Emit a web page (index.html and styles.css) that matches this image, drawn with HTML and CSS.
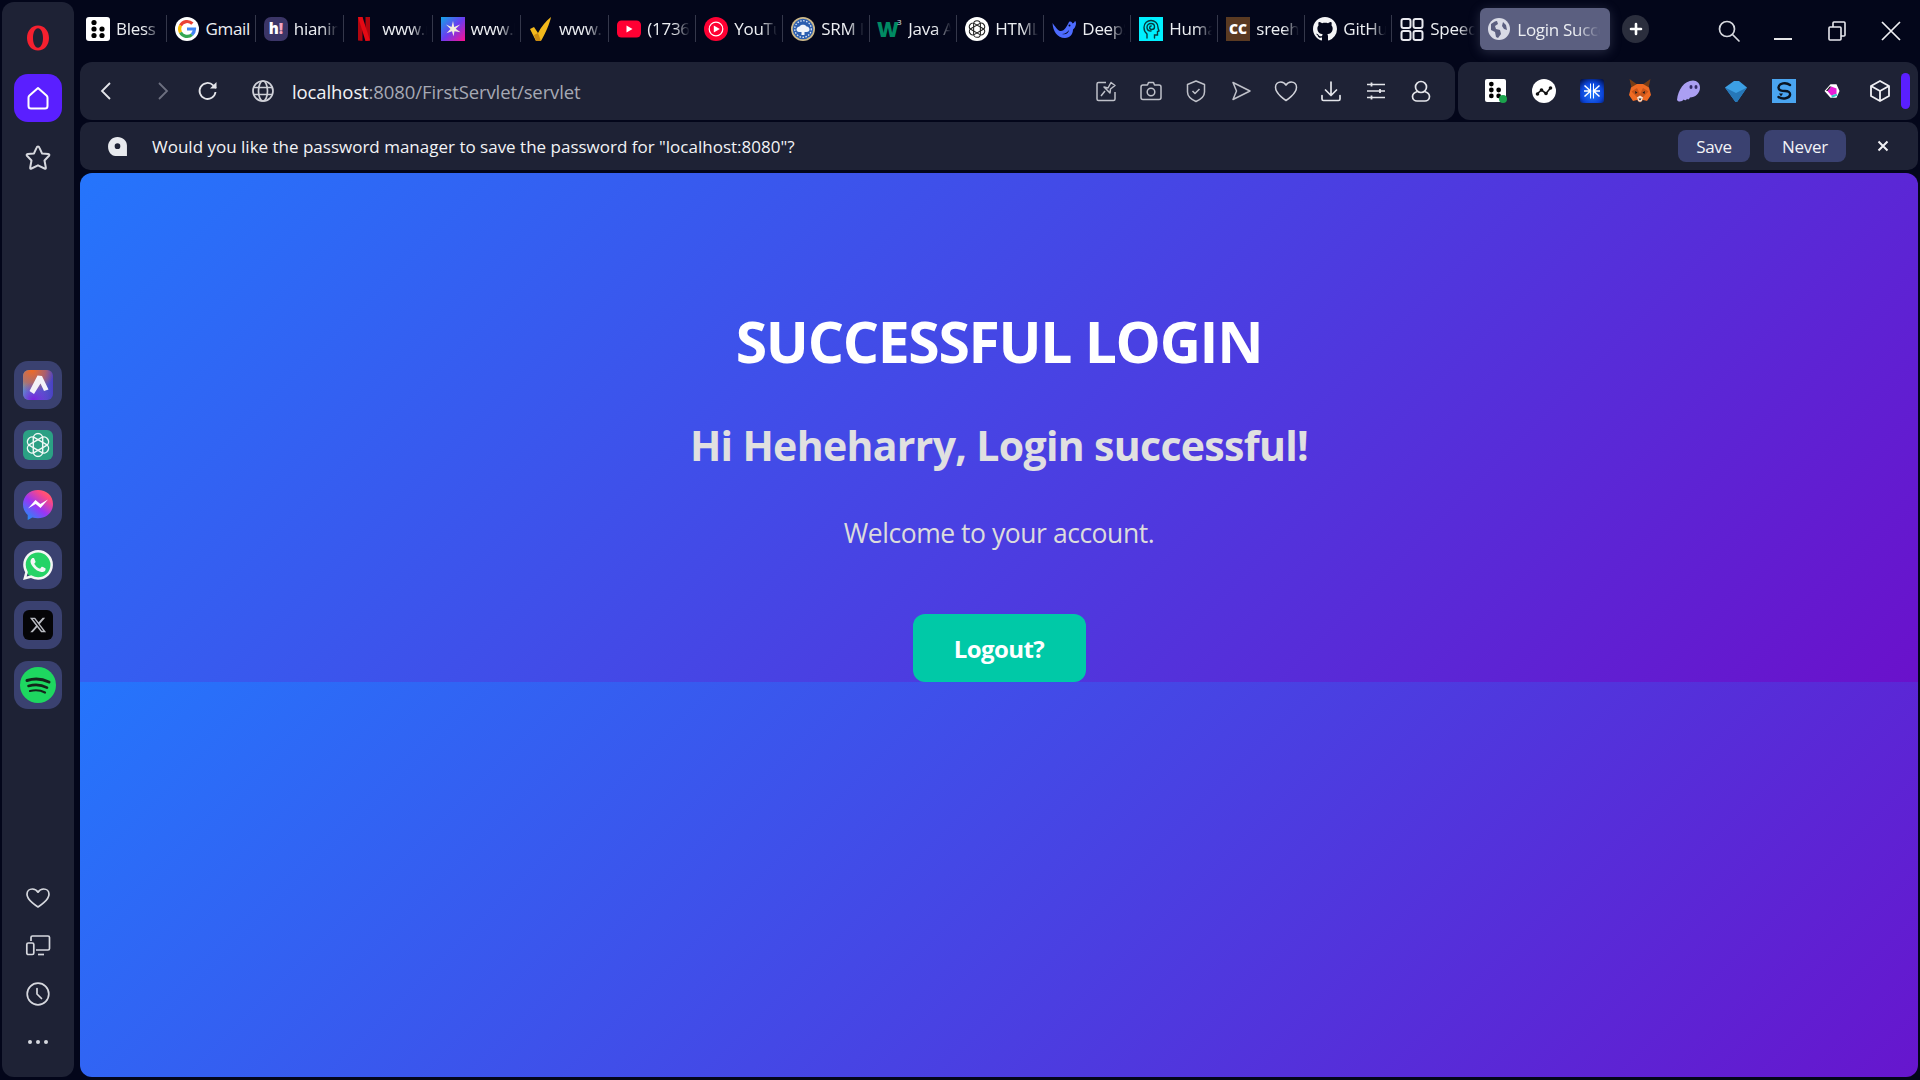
FILE: index.html
```html
<!DOCTYPE html>
<html lang="en">
<head>
<meta charset="utf-8">
<title>Login Successful</title>
<link rel="stylesheet" href="styles.css">
</head>
<body>
<svg class="defs" width="0" height="0" aria-hidden="true">
  <defs>
    <symbol id="gptknot" viewBox="0 0 24 24">
      <g fill="none" stroke="currentColor" stroke-width="1.400">
        <rect x="7.500" y="1" width="9" height="22" rx="4.500"/>
        <rect x="7.500" y="1" width="9" height="22" rx="4.500" transform="rotate(60 12 12)"/>
        <rect x="7.500" y="1" width="9" height="22" rx="4.500" transform="rotate(120 12 12)"/>
      </g>
    </symbol>
    <symbol id="blessdots" viewBox="0 0 24 24">
      <g fill="#000">
        <circle cx="8" cy="5.500" r="2.600"/><circle cx="8" cy="12" r="2.600"/><circle cx="16" cy="12" r="2.600"/>
        <circle cx="8" cy="18.500" r="2.600"/><circle cx="16" cy="18.500" r="2.600"/>
      </g>
    </symbol>
    <linearGradient id="msg" x1="0.100" y1="1" x2="0.900" y2="0">
      <stop offset="0" stop-color="#1597f8"/><stop offset=".45" stop-color="#9a35f5"/><stop offset=".8" stop-color="#ff4a80"/><stop offset="1" stop-color="#ff6a5a"/>
    </linearGradient>
    <linearGradient id="aria" x1="0" y1="0" x2="1" y2="0">
      <stop offset="0" stop-color="#5aa8c8"/><stop offset="1" stop-color="#4a3fc4"/>
    </linearGradient>
    <radialGradient id="ariaTop" cx=".3" cy="0" r=".75">
      <stop offset="0" stop-color="#f26a22"/><stop offset=".6" stop-color="#d0604a" stop-opacity=".7"/><stop offset="1" stop-color="#d0604a" stop-opacity="0"/>
    </radialGradient>
    <radialGradient id="ariaBot" cx=".35" cy="1" r=".6">
      <stop offset="0" stop-color="#7a1fe0"/><stop offset="1" stop-color="#7a1fe0" stop-opacity="0"/>
    </radialGradient>
    <linearGradient id="star" x1="0" y1="0" x2="1" y2="1">
      <stop offset="0" stop-color="#12a7e8"/><stop offset=".5" stop-color="#6a3cf0"/><stop offset="1" stop-color="#ff0f8f"/>
    </linearGradient>
    <radialGradient id="astar" cx=".5" cy=".6" r=".75">
      <stop offset="0" stop-color="#2a80ff"/><stop offset=".6" stop-color="#0b44d8"/><stop offset="1" stop-color="#010d40"/>
    </radialGradient>
  </defs>
</svg>

<div class="app">
  <aside class="sidebar">
    <svg class="opera" viewBox="0 0 30 30"><path fill="#f5202f" fill-rule="evenodd" d="M15 2.500C8.500 2.500 4 8 4 15s4.500 12.500 11 12.500S26 22 26 15 21.500 2.500 15 2.500zm0 2.800c3 0 5 4.400 5 9.700s-2 9.700-5 9.700-5-4.400-5-9.700 2-9.700 5-9.700z"/></svg>
    <div class="home-tile">
      <svg class="i28" viewBox="0 0 28 28"><path fill="none" stroke="#fff" stroke-width="2" stroke-linejoin="round" d="M14 4 L5.500 11.500 Q4.500 12.400 4.500 13.800 V22 Q4.500 24.500 7 24.500 H21 Q23.500 24.500 23.500 22 V13.800 Q23.500 12.400 22.500 11.500 Z"/></svg>
    </div>
    <svg class="star" viewBox="0 0 28 28"><path fill="none" stroke="#d6d8de" stroke-width="2" stroke-linejoin="round" d="M14 2.500Q15 2.500 15.500 3.800L18 9.400 24.300 10.100Q26 10.400 25 11.800L20.500 16.500 21.800 23.500Q22 25.200 20.500 24.500L14 21.300 7.500 24.500Q6 25.200 6.200 23.500L7.500 16.500 3 11.800Q2 10.400 3.700 10.100L10 9.400 12.500 3.800Q13 2.500 14 2.500z"/></svg>

    <div class="apps">
      <div class="app-tile"><svg class="i30" viewBox="0 0 30 30"><rect width="30" height="30" rx="6" fill="url(#aria)"/><rect width="30" height="30" rx="6" fill="url(#ariaTop)"/><rect width="30" height="30" rx="6" fill="url(#ariaBot)"/><path fill="#f4f2f8" d="M14.500 5.500l4.500.5 6.500 13.500-4.500 1.500-3.500-7.500L11 24l-4.500-3z"/></svg></div>
      <div class="app-tile"><svg class="i30" viewBox="0 0 30 30"><rect width="30" height="30" rx="6" fill="#2ba084"/><use href="#gptknot" x="2.500" y="2.500" width="25" height="25" color="#eef7f4"/></svg></div>
      <div class="app-tile"><svg class="i30" viewBox="0 0 30 30"><path fill="url(#msg)" d="M15 0C6.600 0 0 6.100 0 14.400c0 4.300 1.800 8 4.700 10.600V30l4.600-2.500c1.800.5 3.700.8 5.700.8 8.400 0 15-6.100 15-14.400S23.400 0 15 0z"/><path fill="#fff" d="M5 18.500l7.500-8.500 4.800 4 7.700-4.500-7.500 8.500-4.800-4z"/></svg></div>
      <div class="app-tile"><svg class="i30" viewBox="0 0 24 24"><circle cx="12" cy="12" r="11" fill="#25d366"/><path fill="#f4f6f5" d="M17.472 14.382c-.297-.149-1.758-.867-2.030-.967-.273-.099-.471-.148-.670.150-.197.297-.767.966-.940 1.164-.173.199-.347.223-.644.075-.297-.150-1.255-.463-2.390-1.475-.883-.788-1.480-1.761-1.653-2.059-.173-.297-.018-.458.130-.606.134-.133.298-.347.446-.520.149-.174.198-.298.298-.497.099-.198.050-.371-.025-.520-.075-.149-.669-1.612-.916-2.207-.242-.579-.487-.500-.669-.510-.173-.008-.371-.010-.570-.010-.198 0-.520.074-.792.372-.272.297-1.040 1.016-1.040 2.479 0 1.462 1.065 2.875 1.213 3.074.149.198 2.096 3.200 5.077 4.487.709.306 1.262.489 1.694.625.712.227 1.360.195 1.871.118.571-.085 1.758-.719 2.006-1.413.248-.694.248-1.289.173-1.413-.074-.124-.272-.198-.570-.347m-5.421 7.403h-.004a9.870 9.870 0 01-5.031-1.378l-.361-.214-3.741.982.998-3.648-.235-.374a9.860 9.860 0 01-1.510-5.260c.001-5.450 4.436-9.884 9.888-9.884 2.640 0 5.122 1.030 6.988 2.898a9.825 9.825 0 012.893 6.994c-.003 5.450-4.437 9.884-9.885 9.884m8.413-18.297A11.815 11.815 0 0012.050 0C5.495 0 .160 5.335.157 11.892c0 2.096.547 4.142 1.588 5.945L.057 24l6.305-1.654a11.882 11.882 0 005.683 1.448h.005c6.554 0 11.890-5.335 11.893-11.893a11.821 11.821 0 00-3.480-8.413z"/></svg></div>
      <div class="app-tile"><svg class="i30" viewBox="0 0 30 30"><rect width="30" height="30" rx="6" fill="#050507"/><g transform="translate(6 6) scale(.75)"><path fill="#b9bbc1" d="M18.244 2.250h3.308l-7.227 8.260 8.502 11.240H16.170l-5.214-6.817L4.990 21.750H1.680l7.730-8.835L1.254 2.250H8.080l4.713 6.231zm-1.161 17.520h1.833L7.084 4.126H5.117z"/></g></svg></div>
      <div class="app-tile"><svg class="i36" viewBox="0 0 36 36"><circle cx="18" cy="18" r="18" fill="#1ed760"/><g fill="none" stroke="#14241a" stroke-linecap="round"><path stroke-width="3" d="M7 13.500c7-2.200 15-1.800 22 1.500"/><path stroke-width="2.600" d="M8.500 19c6-1.700 13-1.300 18.500 1.700"/><path stroke-width="2.200" d="M10 24c5-1.200 10.500-.9 15 1.500"/></g></svg></div>
    </div>

    <div class="side-bottom">
      <svg class="side-ico" viewBox="0 0 24 24"><path fill="none" stroke="#d6d8de" stroke-width="1.700" stroke-linejoin="round" d="M12 22S1 15.500 1 9.200C1 6 3.500 4 6.300 4 8.600 4 10.800 5.200 12 7.200 13.200 5.200 15.400 4 17.700 4 20.500 4 23 6 23 9.200 23 15.500 12 22 12 22z"/></svg>
      <svg class="side-ico" viewBox="0 0 24 24"><g fill="none" stroke="#d6d8de" stroke-width="1.700" stroke-linejoin="round"><path d="M5 8V4.500Q5 3 6.500 3H22Q23.500 3 23.500 4.500V15.500Q23.500 17 22 17H10"/><rect x=".8" y="10" width="7" height="11.500" rx="1.500"/><path d="M12 21.500h6"/></g></svg>
      <svg class="side-ico" viewBox="0 0 24 24"><g fill="none" stroke="#d6d8de" stroke-width="1.700" stroke-linecap="round"><circle cx="12" cy="12" r="10.800"/><path d="M11 6.500V12l4.500 4.500"/></g></svg>
      <svg class="side-ico" viewBox="0 0 24 24"><g fill="#d6d8de"><circle cx="4" cy="12" r="2"/><circle cx="12" cy="12" r="2"/><circle cx="20" cy="12" r="2"/></g></svg>
    </div>
  </aside>

  <main class="main">
    <div class="tabstrip">
      <div class="tab"><svg class="fav" viewBox="0 0 24 24"><rect width="24" height="24" rx="3" fill="#fff"/><use href="#blessdots" width="24" height="24"/></svg><span class="title">Bless</span></div>
      <div class="tab"><svg class="fav" viewBox="0 0 24 24"><circle cx="12" cy="12" r="12" fill="#fff"/><path fill="none" stroke="#ea4335" stroke-width="3.200" d="M5.500 8.500A7.500 7.500 0 0 1 17.400 6.700"/><path fill="none" stroke="#fbbc05" stroke-width="3.200" d="M5.500 8.500a7.500 7.500 0 0 0 0 7"/><path fill="none" stroke="#34a853" stroke-width="3.200" d="M5.500 15.500a7.500 7.500 0 0 0 11.500 2.100"/><path fill="none" stroke="#4285f4" stroke-width="3.200" d="M17 17.600A7.500 7.500 0 0 0 19.500 12H12"/></svg><span class="title full">Gmail</span></div>
      <div class="tab"><svg class="fav" viewBox="0 0 24 24"><rect width="24" height="24" rx="7" fill="#3b3567"/><text x="12" y="17" class="fav-h">h<tspan fill="#f4a6c0">!</tspan></text></svg><span class="title">hianime</span></div>
      <div class="tab"><svg class="fav" viewBox="0 0 24 24"><path fill="#b1060f" d="M6 0h4.500v24L6 23.500z M13.500 0H18v23.500L13.500 24z"/><path fill="#e50914" d="M6 0h4.500l7.500 23.500L13.500 24z"/></svg><span class="title">www.netflix</span></div>
      <div class="tab"><svg class="fav" viewBox="0 0 24 24"><rect width="24" height="24" fill="url(#star)"/><path fill="#f3eedd" d="M12 4l1.200 6 6-2.500-4.500 4.300 4.800 3.500-6-1-1 5-1.500-5-5.500 2 4-4.200L5 7.500l5.500 2.500z"/></svg><span class="title">www.lovable</span></div>
      <div class="tab"><svg class="fav" viewBox="0 0 24 24"><path fill="#f2b81c" d="M1 12l4-2 4 6C12 10 17 4 22 0c-1 6-6 17-10 24H7z"/><path fill="#c98a10" d="M7 24l-2-6 4-2 3 8z"/></svg><span class="title">www.sololearn</span></div>
      <div class="tab"><svg class="fav" viewBox="0 0 24 24"><rect y="3.500" width="24" height="17" rx="4.500" fill="#ff0033"/><path fill="#fff" d="M9.500 8.500l6 3.500-6 3.500z"/></svg><span class="title">(1736) YouTube</span></div>
      <div class="tab"><svg class="fav" viewBox="0 0 24 24"><circle cx="12" cy="12" r="12" fill="#ff0033"/><circle cx="12" cy="12" r="6.800" fill="none" stroke="#fff" stroke-width="1.200"/><path fill="#fff" d="M9.800 8.500l6 3.500-6 3.500z"/></svg><span class="title">YouTube Music</span></div>
      <div class="tab"><svg class="fav" viewBox="0 0 24 24"><circle cx="12" cy="12" r="12" fill="#cdb98a"/><circle cx="12" cy="12" r="10.300" fill="#2c5fb0"/><circle cx="12" cy="12" r="8.300" fill="none" stroke="#dfe6f2" stroke-width="1.300" stroke-dasharray="1.500 1.500"/><path fill="#f2f5fa" d="M5.500 12.500c0-2 2-3 3-3 1-2.500 6-2.500 7 0 2 0 3 1.500 3 3s-1 2.500-3 2.500h-2v3h-3v-3H8c-1.500 0-2.500-1-2.500-2.500z"/></svg><span class="title">SRM Institute</span></div>
      <div class="tab"><svg class="fav" viewBox="0 0 24 24"><text x="-1" y="20" class="fav-w">W</text><text x="19" y="8" class="fav-3">3</text></svg><span class="title">Java ArrayList</span></div>
      <div class="tab"><svg class="fav" viewBox="0 0 24 24"><circle cx="12" cy="12" r="12" fill="#fff"/><use href="#gptknot" x="3" y="3" width="18" height="18" color="#222"/></svg><span class="title">HTML Basics</span></div>
      <div class="tab"><svg class="fav" viewBox="0 0 24 24"><path fill="#4d6bfe" d="M.5 6C1 14 5 21 13 21 18 21 21 17 21 12.500 22 12 23.500 10 24 7 24 5 23.500 4 23 4 22.500 5 22 6 20.500 6.500 20 5 18.500 4 17 5 15 9 12 15 8 14 5 13 3 9 .5 6z"/><circle cx="17.500" cy="8.500" r="1" fill="#03061a"/><path fill="#03061a" d="M10 17c3 0 5-1.500 7-4-.5 3-3 5-7 4z"/></svg><span class="title">DeepSeek</span></div>
      <div class="tab"><svg class="fav" viewBox="0 0 24 24"><rect width="24" height="24" fill="#00f0ff"/><g fill="none" stroke="#063c40" stroke-width="1.400" stroke-linecap="round"><path d="M8 21v-4C5.500 15 5 12.500 5 10.500 5 6 8.500 3.500 12 3.500s7 2.500 7 7c0 1.500 1 3 1 3.500l-1.500.5V18h-3v3"/><path d="M12 14c-2.500 0-4-1.800-4-3.800S9.800 6.500 12 6.500s3.500 1.700 3.500 3.500-1.300 2.500-2.800 2.500-2-1-2-2 .8-1.500 1.500-1.500"/></g></svg><span class="title">Humanizer</span></div>
      <div class="tab"><svg class="fav" viewBox="0 0 24 24"><rect width="24" height="24" fill="#5a3a22"/><text x="12" y="17" class="fav-c">CC</text></svg><span class="title">sreehari</span></div>
      <div class="tab"><svg class="fav" viewBox="0 0 16 16"><path fill="#f4f4f6" d="M8 0C3.580 0 0 3.580 0 8c0 3.540 2.290 6.530 5.470 7.590.4.070.55-.17.55-.38 0-.19-.01-.82-.01-1.490-2.010.37-2.530-.49-2.690-.94-.09-.23-.48-.94-.82-1.130-.28-.15-.68-.52-.01-.53.63-.01 1.080.58 1.230.82.72 1.210 1.870.87 2.330.66.070-.52.28-.87.51-1.070-1.780-.2-3.640-.89-3.640-3.950 0-.87.31-1.590.82-2.150-.08-.2-.36-1.020.08-2.120 0 0 .67-.21 2.200.82.64-.18 1.320-.27 2-.27.68 0 1.360.09 2 .27 1.530-1.040 2.200-.82 2.200-.82.44 1.100.16 1.920.08 2.120.51.56.82 1.270.82 2.150 0 3.070-1.870 3.750-3.650 3.950.29.25.54.73.54 1.480 0 1.070-.01 1.930-.01 2.200 0 .21.15.46.55.38A8.013 8.013 0 0016 8c0-4.420-3.580-8-8-8z"/></svg><span class="title">GitHub</span></div>
      <div class="tab last"><svg class="fav" viewBox="0 0 24 24"><g fill="none" stroke="#e8e8ee" stroke-width="2"><rect x="1.500" y="2" width="9" height="9" rx="2"/><rect x="13.500" y="2" width="9" height="9" rx="2"/><rect x="1.500" y="14" width="9" height="9" rx="2"/><rect x="13.500" y="14" width="9" height="9" rx="2"/></g></svg><span class="title">Speed Dial</span></div>
      <div class="tab-active"><svg class="fav" viewBox="0 0 24 24"><circle cx="12" cy="12" r="11" fill="#d9dbe6"/><path fill="#5b5f80" d="M4 7c3-2 4-3 6-3l1 3-3 2 1 3 4 1 1 4-3 4-2-1-1-5-4-2zM16 5l3 3 1 5-3-1-2-3z"/></svg><span class="title">Login Successful</span></div>
      <div class="newtab"><svg class="i14" viewBox="0 0 14 14"><path stroke="#fff" stroke-width="2.600" stroke-linecap="round" d="M7 2v10M2 7h10"/></svg></div>
      <div class="winctl">
        <div class="wbtn"><svg class="i24" viewBox="0 0 24 24"><g fill="none" stroke="#d6d8de" stroke-width="1.700" stroke-linecap="round"><circle cx="10" cy="10" r="7.500"/><path d="M15.500 15.500l6.500 6.500"/></g></svg></div>
        <div class="wbtn"><svg class="i24" viewBox="0 0 24 24"><path stroke="#fff" stroke-width="1.800" d="M3 20h18"/></svg></div>
        <div class="wbtn"><svg class="i24" viewBox="0 0 24 24"><g fill="none" stroke="#e8e8ee" stroke-width="1.600"><rect x="4" y="8" width="12" height="13" rx="1"/><path d="M8 8V4q0-1 1-1h10q1 0 1 1v12q0 1-1 1h-3"/></g></svg></div>
        <div class="wbtn"><svg class="i24" viewBox="0 0 24 24"><path stroke="#f0f0f4" stroke-width="1.700" d="M3 3l18 18M21 3L3 21"/></svg></div>
      </div>
    </div>

    <div class="toolrow">
      <div class="addressbar">
        <svg class="tool back" viewBox="0 0 24 24"><path fill="none" stroke="#e4e5ea" stroke-width="1.800" d="M16 4l-8 8 8 8"/></svg>
        <svg class="tool fwd" viewBox="0 0 24 24"><path fill="none" stroke="#6d7080" stroke-width="1.800" d="M9 4l8 8-8 8"/></svg>
        <svg class="tool reload" viewBox="0 0 24 24"><g fill="none" stroke="#e4e5ea" stroke-width="1.800"><path d="M19.500 13a8 8 0 1 1-2.300-6.700L20 9"/></g><path fill="#e4e5ea" d="M20.500 3v6.500H14z"/></svg>
        <svg class="tool globe" viewBox="0 0 24 24"><g fill="none" stroke="#cfd1d8" stroke-width="1.700"><circle cx="12" cy="12" r="10"/><ellipse cx="12" cy="12" rx="4.500" ry="10"/><path d="M2.500 8.500h19M2.500 15.500h19"/></g></svg>
        <div class="url"><span class="host">localhost</span>:8080/FirstServlet/servlet</div>
        <div class="tools">
          <div class="titem"><svg class="i24" viewBox="0 0 24 24"><g fill="none" stroke="#bfc1c9" stroke-width="1.500" stroke-linejoin="round"><path d="M12 3.500H4.500q-1.500 0-1.500 1.500v15q0 1.500 1.500 1.500h15q1.500 0 1.500-1.500v-7"/><path d="M14 9l3-5.500 4 3L16.500 10l-.5 4-6-6zM11 12l-4 5"/></g></svg></div>
          <div class="titem"><svg class="i24" viewBox="0 0 24 24"><g fill="none" stroke="#bfc1c9" stroke-width="1.500" stroke-linejoin="round"><path d="M8.500 6l1-2.500h5L15.500 6H20q2 0 2 2v10.500q0 2-2 2H4q-2 0-2-2V8q0-2 2-2z"/><circle cx="12" cy="13" r="3.800"/></g></svg></div>
          <div class="titem"><svg class="i24" viewBox="0 0 24 24"><g fill="none" stroke="#bfc1c9" stroke-width="1.500" stroke-linejoin="round"><path d="M12 2l8.500 3.500V13c0 4.500-4 7.500-8.500 9.500C7.500 20.500 3.500 17.500 3.500 13V5.500z"/><path d="M8.500 12l2.500 2.500 4.500-4.500"/></g></svg></div>
          <div class="titem"><svg class="i24" viewBox="0 0 24 24"><path fill="none" stroke="#bfc1c9" stroke-width="1.500" stroke-linejoin="round" d="M4 3.500l17 8.500-17 8.500 3.500-8.500z"/></svg></div>
          <div class="titem"><svg class="i24" viewBox="0 0 24 24"><path fill="none" stroke="#d0d2d9" stroke-width="1.500" stroke-linejoin="round" d="M12 21.500S1.500 15 1.500 8.300C1.500 5 4 3 6.800 3 9 3 10.900 4.200 12 6.200 13.100 4.200 15 3 17.200 3 20 3 22.500 5 22.500 8.300 22.500 15 12 21.500 12 21.500z"/></svg></div>
          <div class="titem"><svg class="i24" viewBox="0 0 24 24"><g fill="none" stroke="#e4e5ea" stroke-width="1.700" stroke-linecap="round" stroke-linejoin="round"><path d="M12 3v13M6.500 11l5.500 5.500 5.500-5.500"/><path d="M3 16.500V20q0 1.500 1.500 1.500h15Q21 21.500 21 20v-3.500"/></g></svg></div>
          <div class="titem"><svg class="i24" viewBox="0 0 24 24"><g stroke="#e4e5ea" stroke-width="1.600"><path d="M3 5.500h18M3 12h18M3 18.500h18"/><path stroke-width="1.800" d="M7.500 3.500v4M16 10v4M7.500 16.500v4"/></g></svg></div>
          <div class="titem"><svg class="i24" viewBox="0 0 24 24"><g fill="none" stroke="#e4e5ea" stroke-width="1.700"><circle cx="12" cy="8" r="5.500"/><path d="M8.500 12.500C5 13.500 3.500 15.500 3.500 17.500 3.500 20.500 6 22 8 22h8c2 0 4.500-1.500 4.500-4.500 0-2-1.500-4-5-5"/></g></svg></div>
        </div>
      </div>
      <div class="extpanel">
        <div class="ext"><svg class="i24" viewBox="0 0 24 24"><rect x="1" y="0" width="21" height="23" rx="2" fill="#fff"/><use href="#blessdots" x="0" y="0" width="22" height="22"/><circle cx="19" cy="20" r="4" fill="#1ba34c"/></svg></div>
        <div class="ext"><svg class="i24" viewBox="0 0 24 24"><circle cx="12" cy="12" r="12" fill="#fff"/><path fill="none" stroke="#111" stroke-width="1.600" d="M5 15l4.500-4 4.500 3.500 4.500-5.500"/><g fill="#111"><circle cx="5.500" cy="15" r="1.800"/><circle cx="9.500" cy="11" r="1.800"/><circle cx="14" cy="14.500" r="1.800"/><circle cx="18.500" cy="9" r="1.800"/></g></svg></div>
        <div class="ext"><svg class="i24" viewBox="0 0 24 24"><rect width="24" height="24" rx="3" fill="url(#astar)"/><g stroke="#fff" stroke-width="1.500" fill="none"><path d="M4.500 6.500l6 5.500-6 5.500M19.500 6.500l-6 5.500 6 5.500M4 12h6.500M13.500 12H20"/><path d="M10.500 4.500v15M13.500 4.500v15" stroke-width="1"/></g></svg></div>
        <div class="ext"><svg class="i24" viewBox="0 0 24 24"><path fill="#763d16" d="M1.500 0L10 6 4 11zM22.500 0L14 6l6 5z"/><path fill="#ef6a23" d="M3 8.500L9 5h6l6 3.500 2 7.500-4 6-4-1-3 2.500L9 21l-4 1-4-6z"/><path fill="#c9541a" d="M9 9l3 6 3-6 5.500 3.500L15 18h-6l-5.500-5.500z"/><path fill="#f8e4d8" d="M9 18.500l3-2 3 2-1.500 4h-3z"/><path fill="#1d1d1d" d="M10.500 19.500h3L12 21.500zM7 12l2.500 1.500L7.500 15zM17 12l-2.500 1.500 2 1.500z"/></svg></div>
        <div class="ext"><svg class="i24" viewBox="0 0 24 24"><path fill="#ab9ff2" d="M1 21C2 11 8 1.500 17 1.500c4 0 7 3 7 7 0 6-5 10-10 10-1 2-2 2.500-3 1.200-1 2-2.500 2-3.300.8C6.500 22 3 24 1 21z"/><ellipse cx="15" cy="8" rx="1.500" ry="2" fill="#332a66"/><ellipse cx="20" cy="8" rx="1.500" ry="2" fill="#332a66"/></svg></div>
        <div class="ext"><svg class="i24" viewBox="0 0 24 24"><path fill="#3c9fe4" d="M1 8.500L10 2h5l8 6.500L13 23h-1.500z"/><path fill="#2677b8" d="M1 8.500L12 14l11-5.500L13 23h-1.500z"/></svg></div>
        <div class="ext"><svg class="i24" viewBox="0 0 24 24"><rect width="24" height="24" fill="#4aa5f0"/><g fill="none" stroke="#0a1420" stroke-width="2.400" stroke-linecap="round"><path d="M18 6C14 3 7 4 6.500 8.500 6.200 11.500 10 12 13 12s5.500 1 5 4-7 5-11.500 2"/></g><path fill="#0a1420" d="M7 14.500l4 0-2 3z"/></svg></div>
        <div class="ext"><svg class="i24" viewBox="0 0 24 24"><g transform="translate(3 3) scale(.75)"><path fill="#fff" d="M10 3h8l4 9-4 9h-8l-8-9z"/><path fill="#e61ed6" d="M11 6l7 2.500v7L11 18l-5-6z"/><path fill="#35c8c0" d="M11 18l7-2.500 1.500 2.500L12 21z"/><path fill="#111" d="M6 12l5-6-2 0-5 6z"/></g></svg></div>
        <div class="ext"><svg class="i24" viewBox="0 0 24 24"><g fill="none" stroke="#f0f0f4" stroke-width="1.800" stroke-linejoin="round"><path d="M12 2l9 5v10l-9 5-9-5V7z"/><path d="M3 7l9 5 9-5M12 12v10"/></g></svg></div>
        <div class="thumb"></div>
      </div>
    </div>

    <div class="infobar">
      <svg class="keyico" viewBox="0 0 20 20"><path fill="#e8eaee" fill-rule="evenodd" d="M10 1c5 0 9 3.500 9 8v10H8C4 19 1 15 1 10 1 5 5 1 10 1zm0 6a2.700 2.700 0 1 0 0 5.400A2.700 2.700 0 0 0 10 7z"/></svg>
      <div class="infotext">Would you like the password manager to save the password for "localhost:8080"?</div>
      <button class="ibtn save">Save</button>
      <button class="ibtn never">Never</button>
      <svg class="infoclose" viewBox="0 0 12 12"><path stroke="#f0f0f4" stroke-width="2" d="M1.500 1.500l9 9M10.500 1.500l-9 9"/></svg>
    </div>

    <section class="page">
      <h1 class="h1">SUCCESSFUL LOGIN</h1>
      <h2 class="h2">Hi Heheharry, Login successful!</h2>
      <p class="lead">Welcome to your account.</p>
      <a class="logout">Logout?</a>
    </section>
  </main>
</div>
</body>
</html>
```
FILE: styles.css
```css
* { box-sizing: border-box; }
html, body { margin: 0; height: 100%; overflow: hidden; }
body { background: #03061a; font-family: "Open Sans", "Noto Sans", "Liberation Sans", sans-serif; color: #fff; }
.defs { position: absolute; }
svg { display: block; flex: none; overflow: visible; }
.i14 { width: 14px; height: 14px; }
.i24 { width: 24px; height: 24px; }
.i28 { width: 28px; height: 28px; }
.i30 { width: 30px; height: 30px; }
.i36 { width: 36px; height: 36px; }

.app { display: flex; gap: 6px; width: 1920px; height: 1080px; padding: 2px 2px 3px 2px; }

.sidebar { width: 72px; display: flex; flex-direction: column; align-items: center; background: #1e2235; border-radius: 12px; padding: 21px 0 23px; }
.opera { width: 30px; height: 30px; }
.home-tile { width: 48px; height: 48px; margin-top: 21px; border-radius: 14px; background: #5a1fff; display: flex; align-items: center; justify-content: center; }
.side-ico { width: 24px; height: 24px; }
.star { width: 28px; height: 28px; margin-top: 22px; }
.apps { margin-top: 189px; display: flex; flex-direction: column; gap: 12px; }
.app-tile { width: 48px; height: 48px; border-radius: 14px; background: #3a4170; display: flex; align-items: center; justify-content: center; }
.side-bottom { margin-top: auto; display: flex; flex-direction: column; gap: 24.500px; }

.main { width: 1838px; display: flex; flex-direction: column; }

.tabstrip { height: 60px; display: flex; align-items: flex-start; margin-left: -1px; }
.tab { width: 87px; height: 27px; margin-top: 13px; padding-left: 8px; display: flex; align-items: center; gap: 6px; border-right: 1.500px solid #34374a; overflow: hidden; }
.tab:nth-child(-n+6) { width: 88.400px; }
.tab:first-child { padding-left: 7px; }
.tab.last { border-right: 0; width: 88px; }
.fav { width: 24px; height: 24px; }
.title { display: block; flex: 1; min-width: 0; overflow: hidden; white-space: nowrap; font-size: 17px; letter-spacing: -.3px; color: #eceef2; -webkit-mask-image: linear-gradient(to right, #000 62%, transparent 98%); mask-image: linear-gradient(to right, #000 62%, transparent 98%); margin-right: 4px; }
.title.full { -webkit-mask-image: none; mask-image: none; }
.fav-h { font: 800 15px "Open Sans", sans-serif; fill: #fff; text-anchor: middle; }
.fav-w { font: 800 21px "Open Sans", sans-serif; fill: #008a63; }
.fav-3 { font: 400 8px "Open Sans", sans-serif; fill: #e8e8ee; }
.fav-c { font: 800 14px "Open Sans", sans-serif; fill: #fff; text-anchor: middle; }
.tab-active { width: 130px; height: 42px; margin-top: 6px; border-radius: 6px; background: #5b5f80; box-shadow: 0 2px 12px rgba(150,155,190,.25); display: flex; align-items: center; gap: 6px; padding-left: 7px; }
.tab-active .title { -webkit-mask-image: linear-gradient(to right, #000 70%, transparent 98%); mask-image: linear-gradient(to right, #000 70%, transparent 98%); margin-right: 8px; }
.newtab { width: 27px; height: 28px; border-radius: 50%; background: #2b2e3d; margin: 13px 0 0 12px; display: flex; align-items: center; justify-content: center; }
.winctl { margin-left: auto; margin-top: 15px; display: flex; }
.wbtn { width: 54px; height: 28px; display: flex; align-items: center; justify-content: center; }

.toolrow { display: flex; gap: 3px; height: 58px; }
.addressbar { width: 1375px; background: #1e2235; border-radius: 12px; display: flex; align-items: center; padding: 0 12px 0 14px; }
.tool { width: 24px; height: 24px; }
.fwd { margin-left: 32px; }
.reload { margin-left: 22px; }
.globe { margin-left: 31px; }
.url { margin-left: 17px; font-size: 18.500px; letter-spacing: -.1px; color: #a6a9b4; white-space: nowrap; }
.host { color: #f2f3f6; }
.tools { margin-left: auto; display: flex; }
.titem { width: 45px; height: 28px; display: flex; align-items: center; justify-content: center; }
.extpanel { position: relative; width: 460px; background: #1e2235; border-radius: 12px; display: flex; align-items: center; padding-left: 14px; }
.ext { width: 48px; height: 28px; display: flex; align-items: center; justify-content: center; }
.thumb { position: absolute; left: 443px; top: 11px; width: 9px; height: 36px; border-radius: 5px; background: #5a1fff; }

.infobar { margin-top: 2px; height: 48px; background: #1e2235; border-radius: 10px; display: flex; align-items: center; padding-left: 27px; }
.keyico { width: 21px; height: 21px; }
.infotext { margin-left: 24px; padding-top: 1px; font-size: 17px; color: #f2f3f6; white-space: nowrap; }
.ibtn { height: 32px; border: 0; border-radius: 8px; background: #3a4170; color: #f2f3f6; font: 400 17px "Open Sans", sans-serif; letter-spacing: -.3px; padding: 0; }
.save { width: 72px; margin-left: auto; }
.never { width: 82px; margin-left: 14px; }
.infoclose { width: 12px; height: 12px; margin: 0 29px 0 31px; }

.page { margin-top: 3px; flex: 1; border-radius: 12px; background-image: linear-gradient(135deg, #2575fc, #6a11cb); background-size: 100% 509px; background-repeat: repeat-y; display: flex; flex-direction: column; align-items: center; padding-top: 130px; overflow: hidden; }
.h1 { margin: 0; font-size: 57px; line-height: 76px; font-weight: 700; letter-spacing: -1.300px; color: #fff; white-space: nowrap; }
.h2 { margin: 39px 0 0; font-size: 41px; line-height: 54px; font-weight: 700; letter-spacing: -.68px; color: #e0e0e0; white-space: nowrap; }
.lead { margin: 43px 0 0; font-size: 26.500px; line-height: 36px; letter-spacing: -.46px; color: #dcdcdc; white-space: nowrap; }
.logout { margin-top: 63px; width: 173px; height: 68px; border-radius: 12px; background: #00c9a7; display: flex; align-items: center; justify-content: center; font-size: 24px; font-weight: 700; letter-spacing: -.6px; color: #fff; }
```
